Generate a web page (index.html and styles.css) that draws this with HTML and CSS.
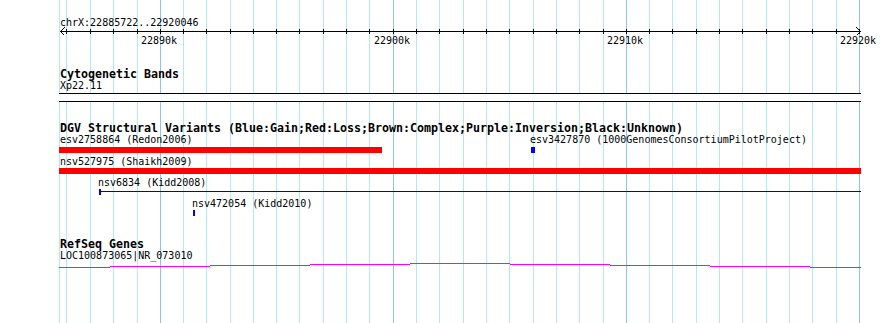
FILE: index.html
```html
<!DOCTYPE html>
<html lang="en">
<head>
  <meta charset="UTF-8">
  <title>chrX:22885722..22920046</title>
  <link rel="stylesheet" href="styles.css">
</head>
<body>
  <!-- Track panel: x = 160 + (bp - 22890000) * 0.0233 -->
  <svg class="panel" width="890" height="323" viewBox="0 0 890 323">
    <!-- Grid lines, one per kb -->
    <g class="grid">
      <rect x="59" y="0" width="1" height="323"/>
      <rect x="66" y="0" width="1" height="323"/>
      <rect x="90" y="0" width="1" height="323"/>
      <rect x="113" y="0" width="1" height="323"/>
      <rect x="137" y="0" width="1" height="323"/>
      <rect class="major" x="160" y="0" width="1" height="323"/>
      <rect x="183" y="0" width="1" height="323"/>
      <rect x="206" y="0" width="1" height="323"/>
      <rect x="230" y="0" width="1" height="323"/>
      <rect x="253" y="0" width="1" height="323"/>
      <rect x="276" y="0" width="1" height="323"/>
      <rect x="299" y="0" width="1" height="323"/>
      <rect x="323" y="0" width="1" height="323"/>
      <rect x="346" y="0" width="1" height="323"/>
      <rect x="369" y="0" width="1" height="323"/>
      <rect class="major" x="393" y="0" width="1" height="323"/>
      <rect x="416" y="0" width="1" height="323"/>
      <rect x="439" y="0" width="1" height="323"/>
      <rect x="463" y="0" width="1" height="323"/>
      <rect x="486" y="0" width="1" height="323"/>
      <rect x="509" y="0" width="1" height="323"/>
      <rect x="533" y="0" width="1" height="323"/>
      <rect x="556" y="0" width="1" height="323"/>
      <rect x="579" y="0" width="1" height="323"/>
      <rect x="603" y="0" width="1" height="323"/>
      <rect class="major" x="626" y="0" width="1" height="323"/>
      <rect x="649" y="0" width="1" height="323"/>
      <rect x="672" y="0" width="1" height="323"/>
      <rect x="696" y="0" width="1" height="323"/>
      <rect x="719" y="0" width="1" height="323"/>
      <rect x="742" y="0" width="1" height="323"/>
      <rect x="766" y="0" width="1" height="323"/>
      <rect x="789" y="0" width="1" height="323"/>
      <rect x="812" y="0" width="1" height="323"/>
      <rect x="836" y="0" width="1" height="323"/>
      <rect class="major" x="859" y="0" width="1" height="323"/>
    </g>

    <!-- Ruler -->
    <g class="ruler">
      <text class="label" x="60" y="26">chrX:22885722..22920046</text>
      <rect x="60" y="31" width="800" height="1"/>
      <path class="arrow" d="M64.5 27.5 L60.5 31.5 L64.5 35.5"/>
      <path class="arrow" d="M856.5 27.5 L860.5 31.5 L856.5 35.5"/>
      <rect x="66" y="29" width="1" height="5"/>
      <rect x="90" y="29" width="1" height="5"/>
      <rect x="113" y="29" width="1" height="5"/>
      <rect x="137" y="29" width="1" height="5"/>
      <rect x="160" y="29" width="1" height="5"/>
      <rect x="183" y="29" width="1" height="5"/>
      <rect x="206" y="29" width="1" height="5"/>
      <rect x="230" y="29" width="1" height="5"/>
      <rect x="253" y="29" width="1" height="5"/>
      <rect x="276" y="29" width="1" height="5"/>
      <rect x="299" y="29" width="1" height="5"/>
      <rect x="323" y="29" width="1" height="5"/>
      <rect x="346" y="29" width="1" height="5"/>
      <rect x="369" y="29" width="1" height="5"/>
      <rect x="393" y="29" width="1" height="5"/>
      <rect x="416" y="29" width="1" height="5"/>
      <rect x="439" y="29" width="1" height="5"/>
      <rect x="463" y="29" width="1" height="5"/>
      <rect x="486" y="29" width="1" height="5"/>
      <rect x="509" y="29" width="1" height="5"/>
      <rect x="533" y="29" width="1" height="5"/>
      <rect x="556" y="29" width="1" height="5"/>
      <rect x="579" y="29" width="1" height="5"/>
      <rect x="603" y="29" width="1" height="5"/>
      <rect x="626" y="29" width="1" height="5"/>
      <rect x="649" y="29" width="1" height="5"/>
      <rect x="672" y="29" width="1" height="5"/>
      <rect x="696" y="29" width="1" height="5"/>
      <rect x="719" y="29" width="1" height="5"/>
      <rect x="742" y="29" width="1" height="5"/>
      <rect x="766" y="29" width="1" height="5"/>
      <rect x="789" y="29" width="1" height="5"/>
      <rect x="812" y="29" width="1" height="5"/>
      <rect x="836" y="29" width="1" height="5"/>
      <rect x="859" y="29" width="1" height="5"/>
      <text class="label tick" x="159" y="44">22890k</text>
      <text class="label tick" x="392" y="44">22900k</text>
      <text class="label tick" x="625" y="44">22910k</text>
      <text class="label tick" x="858" y="44">22920k</text>
    </g>

    <!-- Cytogenetic Bands -->
    <g class="track">
      <text class="title" x="60" y="78">Cytogenetic Bands</text>
      <text class="label" x="60" y="89">Xp22.11</text>
      <rect class="band" x="59" y="93" width="802" height="9"/>
      <rect class="edge" x="59" y="93" width="802" height="1"/>
      <rect class="edge" x="59" y="101" width="802" height="1"/>
    </g>

    <!-- DGV Structural Variants -->
    <g class="track">
      <text class="title" x="60" y="132">DGV Structural Variants (Blue:Gain;Red:Loss;Brown:Complex;Purple:Inversion;Black:Unknown)</text>
      <text class="label" x="60" y="143">esv2758864 (Redon2006)</text>
      <rect class="loss" x="59" y="147" width="323" height="6"/>
      <text class="label" x="530" y="143">esv3427870 (1000GenomesConsortiumPilotProject)</text>
      <rect class="gain" x="531" y="147" width="4" height="6"/>
      <text class="label" x="60" y="165">nsv527975 (Shaikh2009)</text>
      <rect class="loss" x="59" y="168" width="802" height="6"/>
      <text class="label" x="98" y="186">nsv6834 (Kidd2008)</text>
      <rect class="gain" x="99" y="189" width="2" height="6"/>
      <rect class="gain-line" x="99" y="191" width="762" height="1"/>
      <text class="label" x="192" y="207">nsv472054 (Kidd2010)</text>
      <rect class="gain" x="193" y="210" width="2" height="6"/>
    </g>

    <!-- RefSeq Genes -->
    <g class="track">
      <text class="title" x="60" y="248">RefSeq Genes</text>
      <text class="label" x="60" y="259">LOC100873065|NR_073010</text>
      <g class="gene">
        <rect x="59" y="267" width="51" height="1"/>
        <rect x="110" y="266" width="100" height="1"/>
        <rect x="210" y="265" width="100" height="1"/>
        <rect x="310" y="264" width="100" height="1"/>
        <rect x="410" y="263" width="100" height="1"/>
        <rect x="510" y="264" width="100" height="1"/>
        <rect x="610" y="265" width="100" height="1"/>
        <rect x="710" y="266" width="100" height="1"/>
        <rect x="810" y="267" width="51" height="1"/>
      </g>
    </g>
  </svg>
</body>
</html>
```

FILE: styles.css
```css
body {
  margin: 0;
  padding: 0;
  background-color: #fff;
}
.panel {
  display: block;
  shape-rendering: crispEdges;
}
.grid rect {
  fill: #b3e9f0;
}
.grid .major {
  fill: #8cc6ea;
}
.ruler rect {
  fill: #000;
}
.ruler .arrow {
  fill: none;
  stroke: #000;
  stroke-width: 1;
}
.label {
  font-family: "DejaVu Sans Mono", monospace;
  font-size: 10px;
  fill: #000;
}
.tick {
  text-anchor: middle;
}
.title {
  font-family: "DejaVu Sans Mono", monospace;
  font-size: 11.63px;
  font-weight: bold;
  fill: #000;
}
.band {
  fill: #fff;
}
.edge {
  fill: #000;
}
.loss {
  fill: #ff0000;
}
.gain {
  fill: #0000ff;
}
.gain-line {
  fill: #0000c8;
}
.gene rect {
  fill: #ff00ff;
}
```
